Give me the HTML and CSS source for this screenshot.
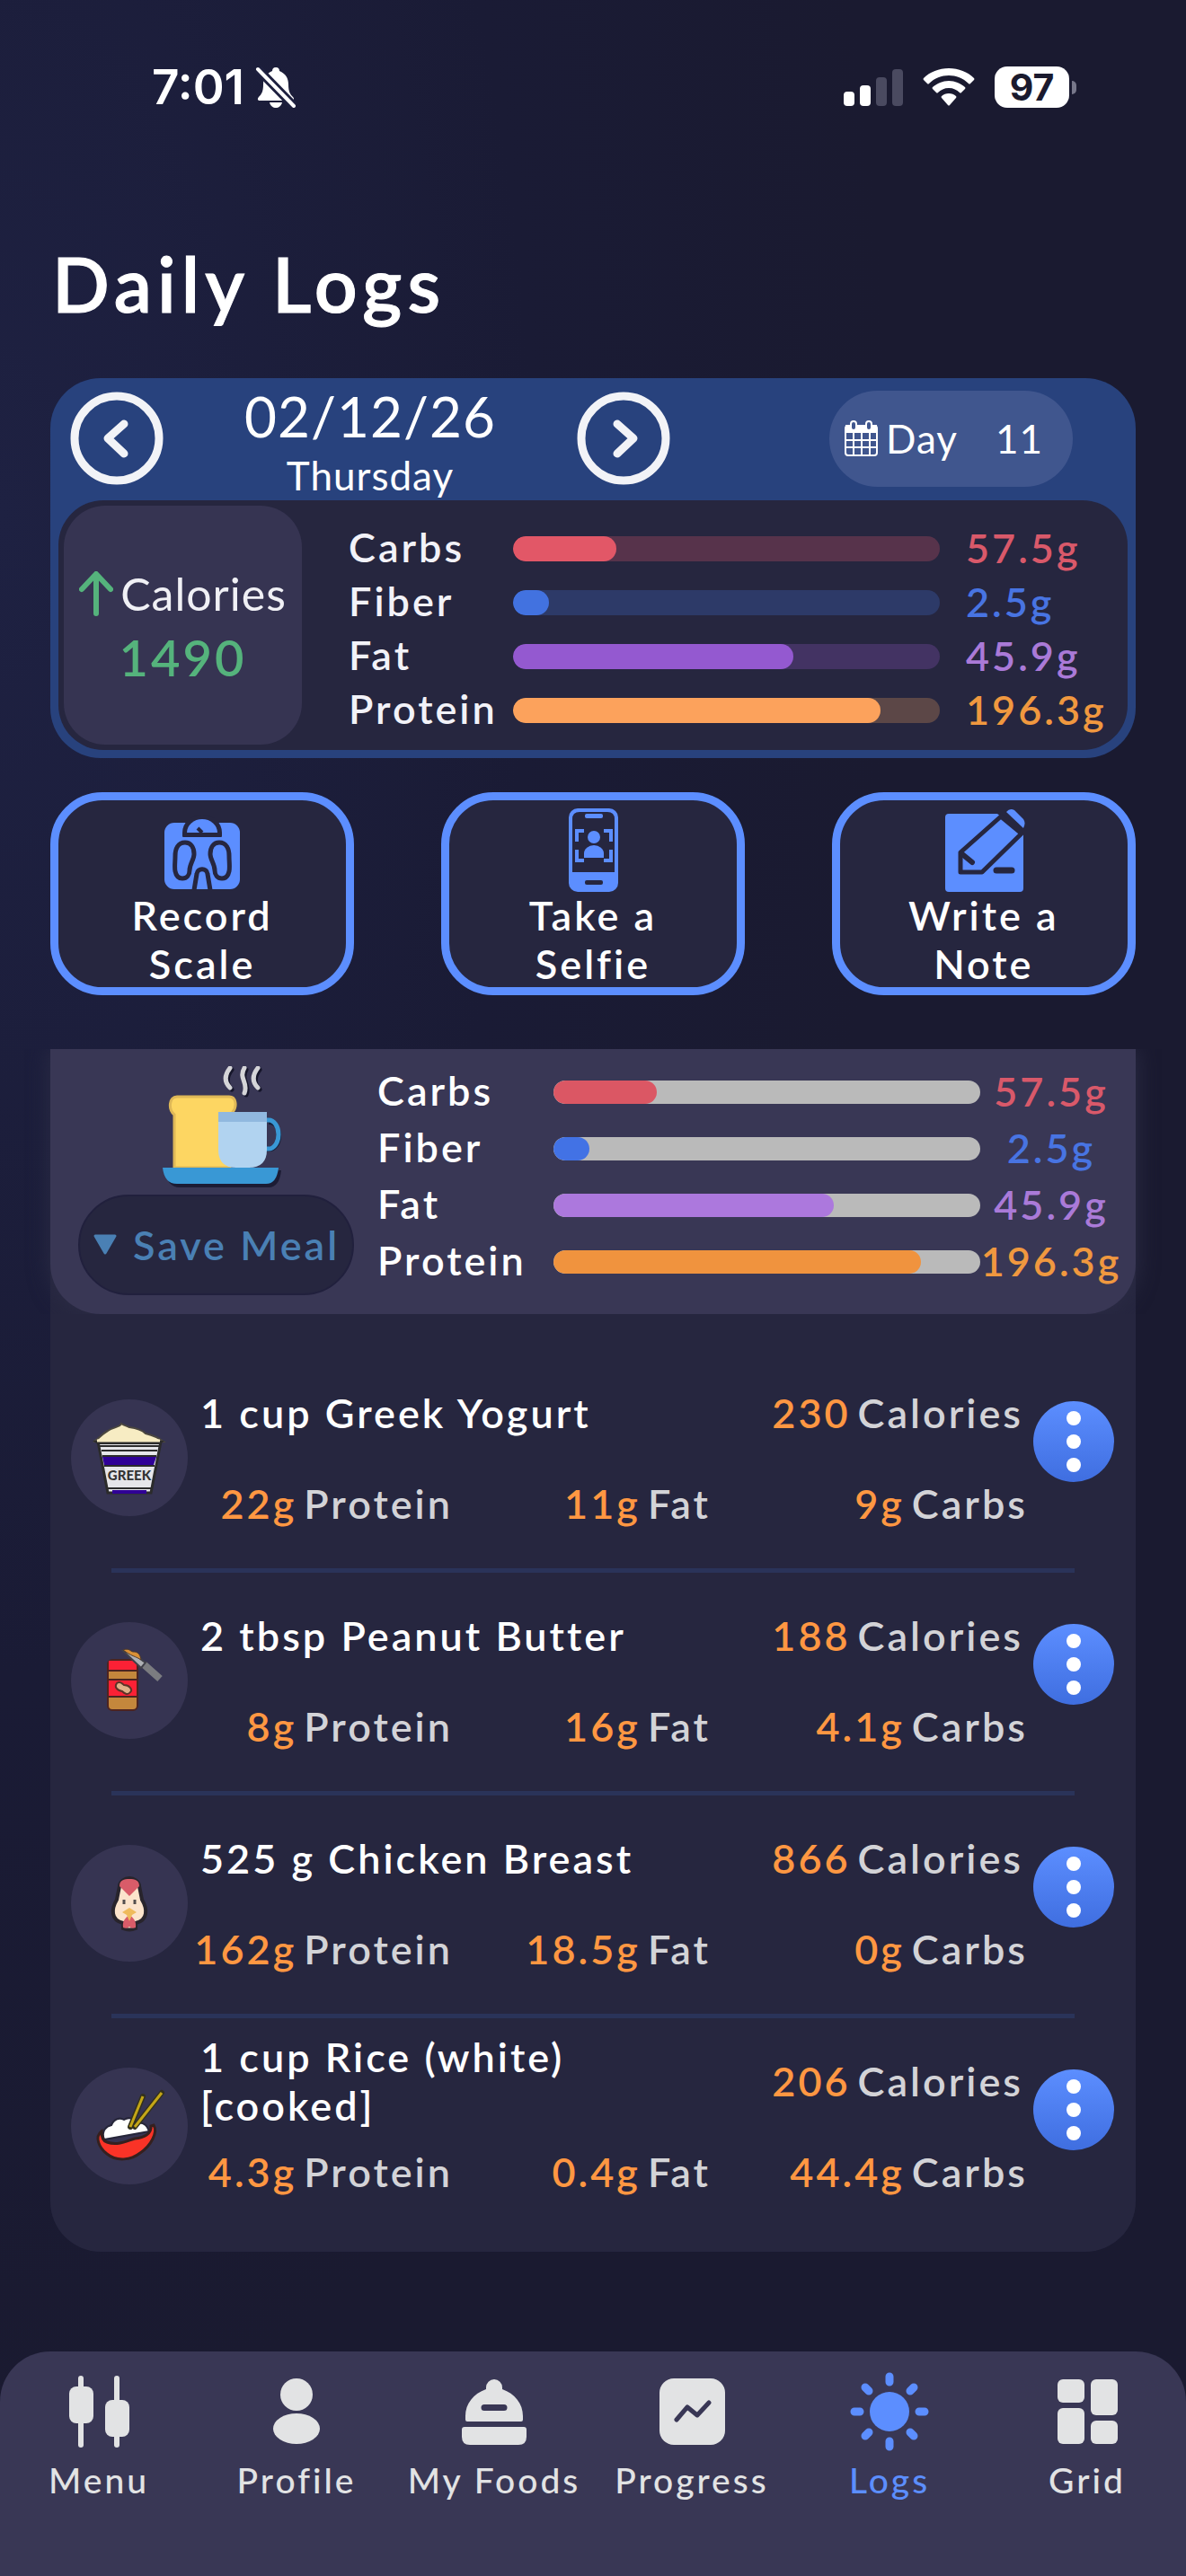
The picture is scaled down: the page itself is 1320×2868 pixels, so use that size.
FILE: index.html
```html
<!DOCTYPE html>
<html lang="en">
<head>
<meta charset="utf-8">
<meta name="viewport" content="width=device-width, initial-scale=1">
<title>Daily Logs</title>
<link rel="stylesheet" href="styles.css">
</head>
<body>
<header class="status">
  <div class="status-side">
    <span class="clock">7:01</span>
    <svg class="bell" viewBox="0 0 46 46" aria-hidden="true">
      <path fill="#fff" d="M23 1c-3 0-4 2-4 4C12 8 9 13 9 20c0 8-2 11-5 14-2 2-1 4 1 4h36c2 0 3-2 1-4-3-3-5-6-5-14 0-7-3-12-10-15 0-2-1-4-4-4z"/>
      <path fill="#fff" d="M16 40h14c-1 4-4 6-7 6s-6-2-7-6z"/>
      <path stroke="#1e203f" stroke-width="10" d="M3 3l40 41"/>
      <path stroke="#fff" stroke-width="4" stroke-linecap="round" d="M3 3l40 41"/>
    </svg>
  </div>
  <div class="status-side status-right">
    <svg class="signal" viewBox="0 0 66 42" aria-hidden="true">
      <rect x="0" y="26" width="12" height="16" rx="4" fill="#fff"/>
      <rect x="18" y="19" width="12" height="23" rx="4" fill="#fff"/>
      <rect x="36" y="10" width="12" height="32" rx="4" fill="#4a4a60"/>
      <rect x="54" y="1" width="12" height="41" rx="4" fill="#4a4a60"/>
    </svg>
    <svg class="wifi" viewBox="0 0 58 42" aria-hidden="true" fill="#fff">
      <path d="M29 0C18 0 8 4 1 11q-1 1 0 2l4 4q1 1 2 0c6-6 14-9 22-9s16 3 22 9q1 1 2 0l4-4q1-1 0-2C50 4 40 0 29 0z"/>
      <path d="M29 14c-7 0-13 3-18 7q-1 1 0 2l4 4q1 1 2 0c3-3 7-5 12-5s9 2 12 5q1 1 2 0l4-4q1-1 0-2c-5-4-11-7-18-7z"/>
      <path d="M29 28c-3 0-6 1-8 3q-1 1 0 2l7 8q1 1 2 0l7-8q1-1 0-2c-2-2-5-3-8-3z"/>
    </svg>
    <span class="battery"><span class="battery-level">97</span><span class="battery-tip"></span></span>
  </div>
</header>

<main class="page">
  <h1 class="title">Daily Logs</h1>

  <section class="day-card" aria-label="Day summary">
    <div class="day-head">
      <button class="round-btn" type="button" aria-label="Previous day">
        <svg viewBox="0 0 104 104"><circle cx="52" cy="52" r="47"/><path d="M60 36L42 52l18 17"/></svg>
      </button>
      <div class="date">
        <div class="date-main">02/12/26</div>
        <div class="date-week">Thursday</div>
      </div>
      <button class="round-btn" type="button" aria-label="Next day">
        <svg viewBox="0 0 104 104"><circle cx="52" cy="52" r="47"/><path d="M45 36l18 16-18 17"/></svg>
      </button>
      <button class="day-pill" type="button">
        <svg class="cal" viewBox="0 0 37 40" aria-hidden="true">
          <rect x="1" y="6" width="35" height="33" rx="3" fill="none" stroke="#fff" stroke-width="2"/>
          <path fill="#fff" d="M1 5h35v9H1z"/>
          <path stroke="#fff" stroke-width="2" d="M10 14v24M19 14v24M28 14v24M2 22h33M2 30h33"/>
          <rect x="7" y="1" width="6" height="10" rx="3" fill="#40568e" stroke="#fff" stroke-width="2"/>
          <rect x="24" y="1" width="6" height="10" rx="3" fill="#40568e" stroke="#fff" stroke-width="2"/>
        </svg>
        <span class="pill-day">Day</span><span>11</span>
      </button>
    </div>
    <div class="day-body">
      <div class="cal-box">
        <div class="cal-label">
          <svg class="up" viewBox="0 0 38 50" aria-hidden="true"><path d="M19 47V4M3 20L19 3l16 17"/></svg>
          <span>Calories</span>
        </div>
        <div class="cal-value">1490</div>
      </div>
      <div class="macros macros-day">
        <span class="m-label">Carbs</span><span class="bar red"><span class="fill" style="width:24.2%"></span></span><span class="m-value t-red">57.5g</span>
        <span class="m-label">Fiber</span><span class="bar blue"><span class="fill" style="width:8.4%"></span></span><span class="m-value t-blue">2.5g</span>
        <span class="m-label">Fat</span><span class="bar purple"><span class="fill" style="width:65.6%"></span></span><span class="m-value t-purple">45.9g</span>
        <span class="m-label">Protein</span><span class="bar orange"><span class="fill" style="width:86.1%"></span></span><span class="m-value t-orange">196.3g</span>
      </div>
    </div>
  </section>

  <div class="actions">
    <button class="action" type="button">
      <svg viewBox="0 0 94 94" aria-hidden="true">
        <rect x="5" y="16" width="84" height="74" rx="11" fill="#5c8eff"/>
        <path d="M25 31V27a22 20 0 0 1 44 0v4q0 1-1 1H26q-1 0-1-1z" fill="#26263f"/>
        <path d="M30 27a17 15 0 0 1 34 0z" fill="#5c8eff"/>
        <path d="M47 27l-5-5" stroke="#26263f" stroke-width="4"/>
        <path d="M28 38c-8 0-11 7-11 15 0 7-1 12 0 17 1 5 4 8 8 8 5 0 8-4 8-9 0-7 5-12 5-18 0-8-4-13-10-13zM66 38c8 0 11 7 11 15 0 7 1 12 0 17-1 5-4 8-8 8-5 0-8-4-8-9 0-7-5-12-5-18 0-8 4-13 10-13z" fill="none" stroke="#26263f" stroke-width="5"/>
        <path d="M38 91l3-18c1-7 11-7 12 0l3 18" fill="none" stroke="#26263f" stroke-width="5"/>
      </svg>
      <span class="action-text">Record Scale</span>
    </button>
    <button class="action" type="button">
      <svg viewBox="0 0 94 94" aria-hidden="true">
        <rect x="20" y="0" width="55" height="93" rx="10" fill="#5c8eff"/>
        <path d="M24 71V12q0-8 8-8h31q8 0 8 8v59z" fill="#26263f"/>
        <rect x="38" y="6" width="20" height="5" rx="2" fill="#5c8eff"/>
        <rect x="38" y="80" width="20" height="5" rx="2" fill="#26263f"/>
        <path d="M37 25h-8v12M59 25h8v12M29 46v12h8M67 46v12h-8" fill="none" stroke="#5c8eff" stroke-width="4"/>
        <circle cx="48" cy="32" r="7" fill="#5c8eff"/>
        <path d="M37 55V50a11 9 0 0 1 22 0v5z" fill="#5c8eff"/>
      </svg>
      <span class="action-text">Take a Selfie</span>
    </button>
    <button class="action" type="button">
      <svg viewBox="0 0 94 94" aria-hidden="true">
        <path d="M8 6H62L91 28V89q0 4-4 4H8q-4 0-4-4V10q0-4 4-4z" fill="#5c8eff"/>
        <path d="M66 9L21 49v22h24l44-43z" fill="#5c8eff" stroke="#26263f" stroke-width="5" stroke-linejoin="round"/>
        <path d="M72 4q4-5 9-2l10 10q3 4 0 10z" fill="#5c8eff"/>
        <path d="M23 51l11 9" stroke="#26263f" stroke-width="6" stroke-linecap="round"/>
        <path d="M61 69h17" stroke="#26263f" stroke-width="7" stroke-linecap="round"/>
      </svg>
      <span class="action-text">Write a Note</span>
    </button>
  </div>

  <section class="meal" aria-label="Breakfast">
    <div class="meal-head">
      <div class="meal-left">
        <svg class="breakfast" viewBox="0 0 134 136" role="img" aria-label="Breakfast">
          <g transform="translate(3 3)" fill="#1c1c34" stroke="none"><path d="M0 113h129q-2 19-14 19H16Q2 132 0 113z"/></g>
          <g fill="none" stroke="#16162b" stroke-width="5" stroke-linecap="round" transform="translate(2 2)"><path d="M75 2c-7 9-6 16 0 22M91 2c-7 12 5 16 0 28M106 2c-7 9-6 16 0 22"/></g>
          <g fill="none" stroke="#d5d5d8" stroke-width="5" stroke-linecap="round"><path d="M75 2c-7 9-6 16 0 22M91 2c-7 12 5 16 0 28M106 2c-7 9-6 16 0 22"/></g>
          <path d="M16 34h58c8 0 9 11 4 17l-3 5v57H13V54c-7-6-6-20 3-20z" fill="#fdd662" stroke="#dfb857" stroke-width="3"/>
          <path d="M118 63h1a11 15 0 0 1 0 30h-3" fill="none" stroke="#15213b" stroke-width="4"/>
          <path d="M116 60h2a11 16 0 0 1 0 32h-3" fill="none" stroke="#3998d5" stroke-width="5"/>
          <path d="M62 51h54v42q0 20-20 20H82q-20 0-20-20z" fill="#b1d3f0"/>
          <path d="M62 51h54v11H62z" fill="#91b8df"/>
          <path d="M0 113h129q-2 18-14 18H16Q2 131 0 113z" fill="#3998d5"/>
        </svg>
        <button class="save" type="button">
          <svg class="tri" viewBox="0 0 28 24" aria-hidden="true"><path d="M3 2h22L14 21z" fill="#4a80b4" stroke="#4a80b4" stroke-width="3" stroke-linejoin="round"/></svg>
          Save Meal
        </button>
      </div>
      <div class="macros macros-meal">
        <span class="m-label">Carbs</span><span class="bar red"><span class="fill" style="width:24.2%"></span></span><span class="m-value t-red">57.5g</span>
        <span class="m-label">Fiber</span><span class="bar blue"><span class="fill" style="width:8.4%"></span></span><span class="m-value t-blue">2.5g</span>
        <span class="m-label">Fat</span><span class="bar purple"><span class="fill" style="width:65.6%"></span></span><span class="m-value t-purple">45.9g</span>
        <span class="m-label">Protein</span><span class="bar orange"><span class="fill" style="width:86.1%"></span></span><span class="m-value t-orange">196.3g</span>
      </div>
    </div>

    <ul class="foods">
      <li class="food">
        <span class="food-icon">
          <svg viewBox="0 0 130 130" aria-hidden="true">
            <path d="M30 47l11 57h48l11-57z" fill="#e6e6ea" stroke="#2b2b2b" stroke-width="3"/>
            <path d="M35 64h60l-3 9H37z" fill="#2f0096"/>
            <path d="M32 52h66M34 57h62M35 63h60M37 74h56M40 99h50" stroke="#2b2b2b" stroke-width="2"/>
            <path d="M46 103h38" stroke="#2f0096" stroke-width="4"/>
            <path d="M25 47c6-3 10-9 16-12 5-4 14-4 15-8 3 2 7 3 9 4 8 1 14 3 18 7 8 2 15 5 20 9z" fill="#f7ecc3" stroke="#4a463f" stroke-width="2"/>
            <path d="M24 46h80l-5 4H30z" fill="#2b2b2b"/>
            <path d="M29 46h70" stroke="#f7ecc3" stroke-width="3"/>
            <text class="cup-text" x="65" y="90" text-anchor="middle">GREEK</text>
          </svg>
        </span>
        <div class="food-info">
          <div class="food-top"><span class="food-name">1 cup Greek Yogurt</span><span class="food-cal"><b>230</b>Calories</span></div>
          <div class="food-macros"><span><b>22g</b>Protein</span><span><b>11g</b>Fat</span><span><b>9g</b>Carbs</span></div>
        </div>
        <button class="more" type="button" aria-label="Options for Greek Yogurt"><i></i><i></i><i></i></button>
      </li>
      <li class="food">
        <span class="food-icon">
          <svg viewBox="0 0 130 130" aria-hidden="true">
            <rect x="41" y="42" width="33" height="56" rx="5" fill="#c4873c" stroke="#4d2420" stroke-width="2"/>
            <path d="M42 43h31v10H42zM42 65h31v17H42z" fill="#fb2135"/>
            <path d="M41 54h33M41 64h33M41 83h33" stroke="#4d2420" stroke-width="2"/>
            <path d="M51 68c4-3 6 1 8 2 6 0 10 5 7 8-3 4-7 1-9-1-6-1-9-5-6-9z" fill="#dfb188" stroke="#5c3428" stroke-width="2"/>
            <path d="M81 47l18 16" stroke="#7b7c80" stroke-width="8"/>
            <path d="M58 32l20 19 5-6c-7-3-9-12-25-13z" fill="#aeb0b5" stroke="#404049" stroke-width="2"/>
            <path d="M58 31c8-3 8 3 13 2 5 1 6 4 7 9-6-4-11-4-20-11z" fill="#d99036" stroke="#4d3a2d" stroke-width="1"/>
          </svg>
        </span>
        <div class="food-info">
          <div class="food-top"><span class="food-name">2 tbsp Peanut Butter</span><span class="food-cal"><b>188</b>Calories</span></div>
          <div class="food-macros"><span><b>8g</b>Protein</span><span><b>16g</b>Fat</span><span><b>4.1g</b>Carbs</span></div>
        </div>
        <button class="more" type="button" aria-label="Options for Peanut Butter"><i></i><i></i><i></i></button>
      </li>
      <li class="food">
        <span class="food-icon">
          <svg viewBox="0 0 130 130" aria-hidden="true">
            <path d="M65 37c-5 0-11 4-11 9l-3 15c-6 10-7 23 7 26v6q7 3 14 0v-6c14-3 13-16 7-26l-3-15c0-5-6-9-11-9z" fill="#fce4cc" stroke="#28242c" stroke-width="4"/>
            <path d="M65 57l-11-11c0-7 5-8 11-8s11 1 11 8z" fill="#d95c69"/>
            <path d="M58 92c-1-8 3-11 7-14 4 3 8 6 7 14q-4 2-7-1-3 3-7 1z" fill="#d95c69"/>
            <path d="M57 75l8-5 8 5-5 3-3 7-3-7z" fill="#efbb5c"/>
            <path d="M59 61v5M71 61v5" stroke="#54504f" stroke-width="3"/>
          </svg>
        </span>
        <div class="food-info">
          <div class="food-top"><span class="food-name">525 g Chicken Breast</span><span class="food-cal"><b>866</b>Calories</span></div>
          <div class="food-macros"><span><b>162g</b>Protein</span><span><b>18.5g</b>Fat</span><span><b>0g</b>Carbs</span></div>
        </div>
        <button class="more" type="button" aria-label="Options for Chicken Breast"><i></i><i></i><i></i></button>
      </li>
      <li class="food">
        <span class="food-icon">
          <svg viewBox="0 0 130 130" aria-hidden="true">
            <path d="M37 80c-4-10 3-15 8-16 3-7 9-9 14-6 6-4 11-1 13 4 8-2 13 2 15 9z" fill="#fff" stroke="#26263a" stroke-width="2"/>
            <path d="M34 71c-8 6-3 18 6 25 11 9 27 7 37-1 12-8 20-23 15-31l-3 1c1 9-8 13-18 14-10 3-19 8-31 4-4-1-6-5-6-12z" fill="#fa3327" stroke="#35201f" stroke-width="3"/>
            <path d="M66 66l14-34M71 66l30-38" stroke="#33311d" stroke-width="6" stroke-linecap="round"/>
            <path d="M66 66l14-34M71 66l30-38" stroke="#c4a617" stroke-width="3"/>
          </svg>
        </span>
        <div class="food-info">
          <div class="food-top"><span class="food-name">1 cup Rice (white) [cooked]</span><span class="food-cal"><b>206</b>Calories</span></div>
          <div class="food-macros"><span><b>4.3g</b>Protein</span><span><b>0.4g</b>Fat</span><span><b>44.4g</b>Carbs</span></div>
        </div>
        <button class="more" type="button" aria-label="Options for Rice"><i></i><i></i><i></i></button>
      </li>
    </ul>
  </section>
</main>

<nav class="tabs" aria-label="Main">
  <a class="tab" href="#menu">
    <svg viewBox="0 0 88 88" aria-hidden="true"><rect x="11" y="16" width="27" height="41" rx="8"/><rect x="51" y="31" width="27" height="41" rx="8"/><rect x="21" y="4" width="6" height="80" rx="3"/><rect x="61" y="4" width="6" height="80" rx="3"/></svg>
    Menu
  </a>
  <a class="tab" href="#profile">
    <svg viewBox="0 0 88 88" aria-hidden="true"><circle cx="44" cy="25" r="18"/><ellipse cx="44" cy="63" rx="26" ry="17"/></svg>
    Profile
  </a>
  <a class="tab" href="#foods">
    <svg viewBox="0 0 88 88" aria-hidden="true"><path fill-rule="evenodd" d="M35 19V17a9 9 0 0 1 18 0v2c14 5 23 16 23 30v4q0 2-2 2H14q-2 0-2-2v-4c0-14 9-25 23-30zM33 36a3 3 0 0 0 0 7h22a3 3 0 0 0 0-7z"/><path d="M11 61h66q3 0 3 3v8q0 9-9 9H17q-9 0-9-9v-8q0-3 3-3z"/></svg>
    My Foods
  </a>
  <a class="tab" href="#progress">
    <svg viewBox="0 0 88 88" aria-hidden="true"><rect x="8" y="7" width="73" height="74" rx="16"/><path class="cut" d="M27 53l12-14 11 9 13-14"/></svg>
    Progress
  </a>
  <a class="tab active" href="#logs" aria-current="page">
    <svg viewBox="0 0 88 88" aria-hidden="true"><circle cx="44" cy="44" r="22"/><path class="rays" d="M44 5v6M44 77v6M5 44h6M77 44h6M17 17l4 4M67 67l4 4M17 71l4-4M67 21l4-4"/></svg>
    Logs
  </a>
  <a class="tab" href="#grid">
    <svg viewBox="0 0 88 88" aria-hidden="true"><rect x="11" y="8" width="30" height="26" rx="6"/><rect x="48" y="8" width="30" height="40" rx="6"/><rect x="11" y="40" width="30" height="40" rx="6"/><rect x="48" y="54" width="30" height="26" rx="6"/></svg>
    Grid
  </a>
</nav>
</body>
</html>
```
FILE: styles.css
```css
* {
  box-sizing: border-box;
}

body {
  margin: 0;
  min-height: 100vh;
  display: flex;
  flex-direction: column;
  font-family: Lato, "Open Sans", sans-serif;
  font-size: 45px;
  line-height: 54px;
  font-weight: 600;
  letter-spacing: 3px;
  color: #fff;
  background: radial-gradient(ellipse 75% 75% at 0 20%, #1e2142, #1a1b35 60%, #1a1a30) #1a1a30;
}

button {
  font: inherit;
  letter-spacing: inherit;
  color: inherit;
  border: 0;
  padding: 0;
  background: none;
  cursor: pointer;
}

svg {
  display: block;
  flex: none;
}

/* Status bar */
.status {
  display: flex;
  justify-content: space-between;
  padding: 66px 122px 0 169px;
}

.status-side {
  display: flex;
  align-items: center;
  gap: 12px;
  height: 62px;
}

.status-right {
  gap: 22px;
}

.clock {
  font: 600 53px/62px Inter, sans-serif;
  letter-spacing: 0;
}

.bell {
  width: 46px;
  height: 46px;
}

.signal {
  width: 66px;
  height: 42px;
}

.wifi {
  width: 58px;
  height: 42px;
}

.battery {
  display: flex;
  align-items: center;
  gap: 3px;
}

.battery-level {
  width: 83px;
  height: 46px;
  border-radius: 14px;
  background: #fff;
  color: #1a1a2e;
  font: 700 41px/46px Inter, sans-serif;
  letter-spacing: 0;
  text-align: center;
}

.battery-tip {
  width: 5px;
  height: 15px;
  border-radius: 0 5px 5px 0;
  background: #77778a;
}

/* Page */
.page {
  padding: 138px 56px 0;
}

.title {
  margin: 0;
  padding-left: 2px;
  font-size: 84px;
  line-height: 100px;
  font-weight: 600;
  letter-spacing: 6px;
  -webkit-text-stroke: 1px currentColor;
}

.day-card {
  margin-top: 55px;
  padding: 0 9px 9px;
  border-radius: 56px;
  background: #28427d;
}

.day-head {
  display: flex;
  align-items: center;
  height: 136px;
  padding: 0 61px 2px 13px;
  font-weight: 400;
  font-size: 44px;
  letter-spacing: 1px;
}

.round-btn svg {
  width: 104px;
  height: 104px;
  fill: none;
  stroke: #f2f3f7;
  stroke-width: 9;
  stroke-linecap: round;
  stroke-linejoin: round;
}

.date {
  width: 460px;
  padding-top: 10px;
  text-align: center;
}

.date-main {
  font-size: 62px;
  line-height: 72px;
}

.date-week {
  line-height: 60px;
}

.day-pill {
  display: flex;
  align-items: center;
  width: 271px;
  height: 107px;
  margin-left: auto;
  padding-left: 17px;
  border-radius: 54px;
  background: #40568e;
}

.cal {
  width: 37px;
  height: 40px;
}

.pill-day {
  margin: 0 42px 0 9px;
}

.day-body {
  display: flex;
  padding: 6px;
  border-radius: 50px;
  background: #26263f;
}

.cal-box {
  display: flex;
  flex-direction: column;
  justify-content: center;
  gap: 14px;
  width: 265px;
  height: 266px;
  padding-top: 4px;
  border-radius: 46px;
  background: #363452;
  text-align: center;
}

.cal-label {
  display: flex;
  align-items: center;
  justify-content: center;
  gap: 8px;
  font-size: 50px;
  font-weight: 400;
  letter-spacing: 1px;
  color: #f0f0f5;
}

.up {
  width: 38px;
  height: 50px;
  fill: none;
  stroke: #55b37c;
  stroke-width: 6;
  stroke-linecap: round;
  stroke-linejoin: round;
}

.cal-value {
  font-size: 56px;
  line-height: 60px;
  color: #55b37c;
}

/* Macro bars */
.macros {
  flex: 1;
  display: grid;
  align-items: center;
  align-content: start;
}

.m-label {
  padding: 0 0 4px 2px;
}

.m-value {
  padding-bottom: 2px;
}

.macros-day {
  grid-template-columns: 185px 1fr 182px;
  grid-auto-rows: 60px;
  padding: 18px 21px 0 50px;
  color: #f2f2f8;
}

.macros-day .m-value {
  margin-left: 29px;
}

.macros-meal {
  grid-template-columns: 198px 1fr 158px;
  grid-auto-rows: 63px;
  padding: 16px 15px 0 24px;
}

.macros-meal .m-value {
  text-align: center;
}

.bar {
  height: 28px;
  border-radius: 14px;
  overflow: hidden;
}

.fill {
  display: block;
  height: 100%;
  border-radius: 14px;
}

.red { background: #57334b; }
.red .fill { background: #e25767; }
.blue { background: #2d3a68; }
.blue .fill { background: #4272e0; }
.purple { background: #433363; }
.purple .fill { background: #9459d0; }
.orange { background: #5c4747; }
.orange .fill { background: #fca25c; }

.macros-meal .bar {
  height: 26px;
  background: #bababa;
}

.macros-meal .red .fill { background: #db5764; }
.macros-meal .blue .fill { background: #4272e5; }
.macros-meal .purple .fill { background: #ac78dd; }
.macros-meal .orange .fill { background: #f0933e; }

.t-red { color: #d9596a; }
.t-blue { color: #4874e2; }
.t-purple { color: #aa7ad8; }
.t-orange { color: #f0983f; }

/* Quick actions */
.actions {
  display: flex;
  justify-content: space-between;
  margin-top: 38px;
}

.action {
  display: flex;
  flex-direction: column;
  align-items: center;
  width: 28%;
  height: 226px;
  padding-top: 9px;
  border: 9px solid #5c8eff;
  border-radius: 58px;
  background: #26263f;
}

.action svg {
  width: 94px;
  height: 94px;
  margin-bottom: -2px;
}

.action-text {
  width: 180px;
}

/* Meal */
.meal {
  margin-top: 60px;
  border-radius: 0 0 56px 56px;
  background: #26263f;
}

.meal-head {
  display: flex;
  height: 295px;
  padding-left: 31px;
  border-radius: 0 0 56px 56px;
  background: #393755;
  box-shadow: 0 0 24px #2c2d46;
  clip-path: inset(0 -40px 0 -40px);
}

.meal-left {
  display: flex;
  flex-direction: column;
  align-items: center;
  gap: 7px;
  width: 307px;
  padding-top: 19px;
}

.breakfast {
  width: 134px;
  height: 136px;
  margin-left: 14px;
}

.save {
  display: flex;
  align-items: center;
  justify-content: center;
  gap: 17px;
  width: 307px;
  height: 112px;
  border: 2px solid #21203d;
  border-radius: 56px;
  background: #26263f;
  color: #4a80b4;
}

.tri {
  width: 28px;
  height: 24px;
}

.foods {
  margin: 0;
  padding: 40px 0 17px;
  list-style: none;
}

.food {
  display: flex;
  align-items: flex-start;
  padding: 16px 24px 45px 23px;
}

.food:not(:last-child) {
  padding-bottom: 50px;
  background: linear-gradient(#2a3359, #2a3359) center bottom / calc(100% - 136px) 5px no-repeat;
}

.food-icon {
  width: 130px;
  height: 130px;
  margin-top: 39px;
  border-radius: 50%;
  background: #363452;
}

.cup-text {
  font: 900 15px Lato, sans-serif;
  letter-spacing: 0;
  fill: #333;
}

.food-info {
  flex: 1;
  display: grid;
  gap: 20px;
}

.food-top {
  display: flex;
  align-items: center;
  justify-content: space-between;
  height: 108px;
  padding: 0 11px 0 14px;
}

.food-name {
  max-width: 540px;
}

.food-cal,
.food-macros {
  color: #d3d3d7;
}

.food-info b {
  margin-right: 8px;
  font-weight: inherit;
  color: #ff9742;
}

.food-macros {
  display: grid;
  grid-template-columns: 295fr 287fr 353fr;
  padding-right: 6px;
  text-align: right;
}

.more {
  display: flex;
  flex-direction: column;
  align-items: center;
  justify-content: center;
  gap: 10px;
  width: 90px;
  height: 90px;
  margin-top: 41px;
  border-radius: 50%;
  background: linear-gradient(#5c8eff, #3f6ee0);
}

.more i {
  width: 16px;
  height: 16px;
  border-radius: 50%;
  background: #fff;
}

/* Tab bar */
.tabs {
  display: grid;
  grid-template-columns: repeat(6, 1fr);
  height: 250px;
  margin-top: auto;
  padding-top: 23px;
  border-radius: 56px 56px 0 0;
  background: #393755;
}

.tab {
  display: flex;
  flex-direction: column;
  align-items: center;
  gap: 8px;
  font-size: 39px;
  line-height: 48px;
  font-weight: 500;
  color: #e2e3e4;
  text-decoration: none;
  white-space: nowrap;
}

.tab svg {
  width: 88px;
  height: 88px;
  fill: currentColor;
}

.tab .cut {
  fill: none;
  stroke: #393755;
  stroke-width: 5;
  stroke-linecap: round;
  stroke-linejoin: round;
}

.tab .rays {
  fill: none;
  stroke: currentColor;
  stroke-width: 9;
  stroke-linecap: round;
}

.tab.active {
  color: #5c8eff;
}
```
